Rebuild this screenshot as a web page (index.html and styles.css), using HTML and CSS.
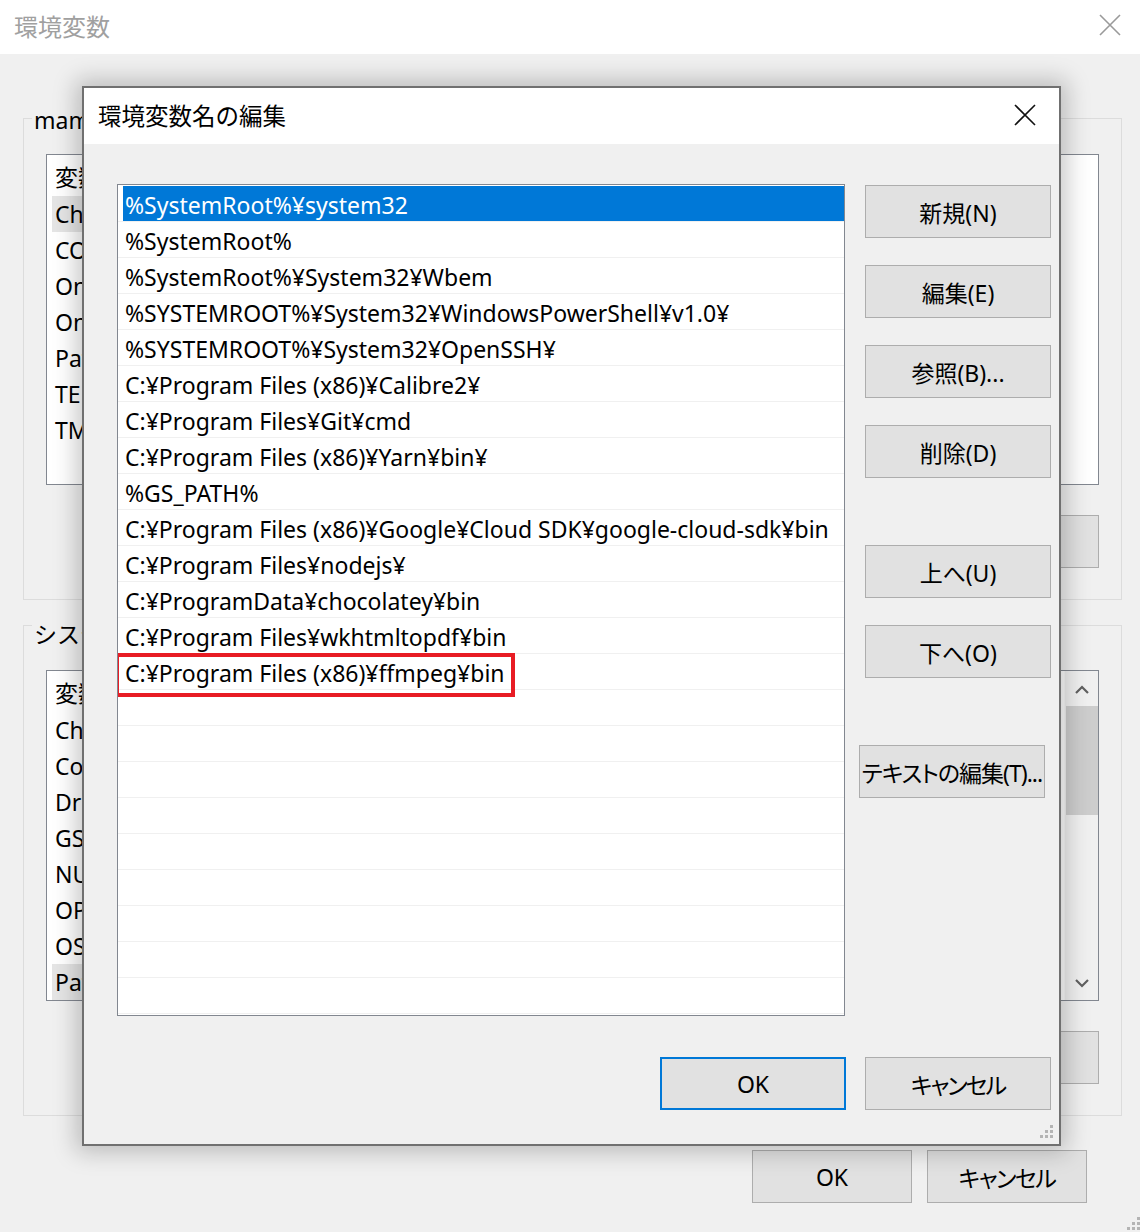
FILE: index.html
```html
<!DOCTYPE html>
<html lang="ja">
<head>
<meta charset="utf-8">
<title>環境変数</title>
<link rel="stylesheet" href="styles.css">
</head>
<body>
<div class="win">
  <div class="win-titlebar">
    <span class="win-title">環境変数</span>
    <svg class="win-close" width="22" height="22" viewBox="0 0 22 22"><path d="M1 1 L21 21 M21 1 L1 21" stroke="#9a9a9a" stroke-width="1.6" fill="none"/></svg>
  </div>
  <div class="win-body">
    <div class="group g1">
      <span class="legend">mama のユーザー環境変数(U)</span>
      <div class="bg-list">
        <div class="bg-row head">変数</div>
        <div class="bg-row hl">ChocolateyLastPathUpdate</div>
        <div class="bg-row">COMPOSER_HOME</div>
        <div class="bg-row">OneDrive</div>
        <div class="bg-row">OneDriveConsumer</div>
        <div class="bg-row">Path</div>
        <div class="bg-row">TEMP</div>
        <div class="bg-row">TMP</div>
      </div>
      <div class="bg-btns">
        <div class="btn bg-btn"></div>
        <div class="btn bg-btn"></div>
        <div class="btn bg-btn"></div>
      </div>
    </div>
    <div class="group g2">
      <span class="legend">システム環境変数(S)</span>
      <div class="bg-list with-scroll">
        <div class="bg-rows">
          <div class="bg-row head">変数</div>
          <div class="bg-row">ChocolateyInstall</div>
          <div class="bg-row">ComSpec</div>
          <div class="bg-row">DriverData</div>
          <div class="bg-row">GS_PATH</div>
          <div class="bg-row">NUMBER_OF_PROCESSORS</div>
          <div class="bg-row">OPENSSL_CONF</div>
          <div class="bg-row">OS</div>
          <div class="bg-row hl">Path</div>
        </div>
        <div class="vscroll">
          <svg class="arrow up" width="16" height="10" viewBox="0 0 16 10"><path d="M2 8 L8 2 L14 8" stroke="#606060" stroke-width="2.2" fill="none"/></svg>
          <div class="thumb"></div>
          <div class="track"></div>
          <svg class="arrow down" width="16" height="10" viewBox="0 0 16 10"><path d="M2 2 L8 8 L14 2" stroke="#606060" stroke-width="2.2" fill="none"/></svg>
        </div>
      </div>
      <div class="bg-btns">
        <div class="btn bg-btn"></div>
        <div class="btn bg-btn"></div>
        <div class="btn bg-btn"></div>
      </div>
    </div>
    <div class="win-foot">
      <div class="btn foot-btn">OK</div>
      <div class="btn foot-btn"><span class="kana">キャンセル</span></div>
    </div>
  </div>
  <svg class="grip win-grip" width="15" height="15" viewBox="0 0 15 15"><g fill="#b4b4b4"><rect x="11" y="1" width="3" height="3"/><rect x="6" y="6" width="3" height="3"/><rect x="11" y="6" width="3" height="3"/><rect x="1" y="11" width="3" height="3"/><rect x="6" y="11" width="3" height="3"/><rect x="11" y="11" width="3" height="3"/></g></svg>
</div>

<div class="dialog">
  <div class="dlg-titlebar">
    <span class="dlg-title">環境変数名の編集</span>
    <svg class="dlg-close" width="22" height="22" viewBox="0 0 22 22"><path d="M1 1 L21 21 M21 1 L1 21" stroke="#111" stroke-width="1.6" fill="none"/></svg>
  </div>
  <div class="dlg-body">
    <div class="dlg-main">
      <div class="path-list">
        <div class="row sel"><span class="cell">%SystemRoot%¥system32</span></div>
        <div class="row"><span class="cell">%SystemRoot%</span></div>
        <div class="row"><span class="cell">%SystemRoot%¥System32¥Wbem</span></div>
        <div class="row"><span class="cell">%SYSTEMROOT%¥System32¥WindowsPowerShell¥v1.0¥</span></div>
        <div class="row"><span class="cell">%SYSTEMROOT%¥System32¥OpenSSH¥</span></div>
        <div class="row"><span class="cell">C:¥Program Files (x86)¥Calibre2¥</span></div>
        <div class="row"><span class="cell">C:¥Program Files¥Git¥cmd</span></div>
        <div class="row"><span class="cell">C:¥Program Files (x86)¥Yarn¥bin¥</span></div>
        <div class="row"><span class="cell">%GS_PATH%</span></div>
        <div class="row"><span class="cell">C:¥Program Files (x86)¥Google¥Cloud SDK¥google-cloud-sdk¥bin</span></div>
        <div class="row"><span class="cell">C:¥Program Files¥nodejs¥</span></div>
        <div class="row"><span class="cell">C:¥ProgramData¥chocolatey¥bin</span></div>
        <div class="row"><span class="cell">C:¥Program Files¥wkhtmltopdf¥bin</span></div>
        <div class="row marked"><span class="cell">C:¥Program Files (x86)¥ffmpeg¥bin</span><span class="mark"></span></div>
        <div class="row"><span class="cell"></span></div>
        <div class="row"><span class="cell"></span></div>
        <div class="row"><span class="cell"></span></div>
        <div class="row"><span class="cell"></span></div>
        <div class="row"><span class="cell"></span></div>
        <div class="row"><span class="cell"></span></div>
        <div class="row"><span class="cell"></span></div>
        <div class="row"><span class="cell"></span></div>
        <div class="row last"><span class="cell"></span></div>
      </div>
      <div class="dlg-side">
        <div class="btn side-btn">新規(N)</div>
        <div class="btn side-btn">編集(E)</div>
        <div class="btn side-btn">参照(B)...</div>
        <div class="btn side-btn">削除(D)</div>
        <div class="btn side-btn sep">上へ(U)</div>
        <div class="btn side-btn">下へ(O)</div>
        <div class="btn side-btn sep text-edit"><span class="kana te">テキストの編集(T)...</span></div>
      </div>
    </div>
    <div class="dlg-foot">
      <div class="btn side-btn default">OK</div>
      <div class="btn side-btn"><span class="kana dk">キャンセル</span></div>
    </div>
  </div>
  <svg class="grip dlg-grip" width="15" height="15" viewBox="0 0 15 15"><g fill="#b4b4b4"><rect x="11" y="1" width="3" height="3"/><rect x="6" y="6" width="3" height="3"/><rect x="11" y="6" width="3" height="3"/><rect x="1" y="11" width="3" height="3"/><rect x="6" y="11" width="3" height="3"/><rect x="11" y="11" width="3" height="3"/></g></svg>
</div>
</body>
</html>
```
FILE: styles.css
```css
* { box-sizing: border-box; }
html, body { margin: 0; padding: 0; }
body {
  width: 1140px;
  height: 1232px;
  overflow: hidden;
  position: relative;
  background: #f0f0f0;
  font-family: "Noto Sans", "Noto Sans CJK JP", sans-serif;
  font-size: 23px;
  color: #000;
}
.win { width: 1140px; height: 1232px; position: relative; }
.win-titlebar {
  height: 54px;
  background: #fff;
  display: flex;
  align-items: center;
  justify-content: space-between;
  padding: 0 19px 0 14px;
}
.win-title { font-size: 24px; color: #a0a0a0; margin-top: -4px; }
.win-close { margin-top: -4px; }
.win-body { padding: 64px 18px 0 23px; }
.group {
  position: relative;
  border: 1px solid #dcdcdc;
  padding: 35px 22px 31px 22px;
}
.g2 { margin-top: 25px; padding-top: 44px; }
.legend {
  position: absolute;
  top: -17px;
  left: 8px;
  padding: 0 2px;
  background: #f0f0f0;
  white-space: nowrap;
}
.g2 .legend { top: -10px; }
.bg-list {
  height: 331px;
  background: #fff;
  border: 1px solid #828790;
  padding: 3px 0 0 5px;
  overflow: hidden;
}
.bg-row {
  height: 36px;
  line-height: 36px;
  padding-left: 3px;
  white-space: nowrap;
}
.bg-row.head { height: 38px; line-height: 38px; }
.bg-row.hl { background: #e5e5e5; width: 280px; }
.with-scroll { display: flex; padding-right: 0; }
.bg-rows { flex: 1; }
.vscroll {
  width: 34px;
  margin-top: -3px;
  height: 329px;
  background: #f0f0f0;
  border-left: 1px solid #fafafa;
  display: flex;
  flex-direction: column;
  align-items: center;
}
.vscroll .arrow.up { margin: 14px 0 11px; }
.vscroll .thumb { width: 32px; height: 109px; background: #cdcdcd; }
.vscroll .track { flex: 1; }
.vscroll .arrow.down { margin: 0 0 12px; }
.btn {
  background: #e1e1e1;
  border: 1px solid #adadad;
  display: flex;
  align-items: center;
  justify-content: center;
  white-space: nowrap;
  height: 53px;
}
.kana {
  display: inline-block;
  font-feature-settings: "palt" 1;
  letter-spacing: -1.5px;
}
.kana.dk { letter-spacing: -2px; }
.kana.te { letter-spacing: -1px; }
.bg-btns {
  margin-top: 30px;
  display: flex;
  justify-content: flex-end;
  gap: 15px;
}
.bg-btn { width: 160px; }
.win-foot {
  margin-top: 34px;
  display: flex;
  justify-content: flex-end;
  gap: 15px;
  padding-right: 35px;
}
.foot-btn { width: 160px; }
.grip { position: absolute; }
.win-grip { right: -1px; bottom: 1px; }

.dialog {
  position: absolute;
  left: 82px;
  top: 86px;
  width: 979px;
  height: 1060px;
  border: 2px solid #707070;
  background: #f0f0f0;
  box-shadow: 0 0 22px 6px rgba(0, 0, 0, 0.22);
}
.dlg-titlebar {
  height: 56px;
  background: #fff;
  display: flex;
  align-items: center;
  justify-content: space-between;
  padding: 0 23px 0 14px;
}
.dlg-title { font-size: 23.5px; margin-top: -3px; }
.dlg-close { margin-top: -2px; }
.dlg-body { padding: 40px 8px 0 33px; }
.dlg-main { display: flex; gap: 20px; }
.path-list {
  position: relative;
  width: 728px;
  height: 832px;
  background: #fff;
  border: 1px solid #828790;
  padding-top: 1px;
  overflow: hidden;
}
.row {
  position: relative;
  height: 36px;
  border-bottom: 1px solid #f0f0f0;
  padding-left: 5px;
}
.row .cell {
  display: block;
  height: 35px;
  line-height: 34px;
  padding: 2px 0 0 2px;
  white-space: nowrap;
}
.row.sel .cell { background: #0078d7; color: #fff; }
.mark {
  position: absolute;
  left: -3px;
  top: -1px;
  width: 400px;
  height: 44px;
  border: 4px solid #e81c24;
}
.dlg-side {
  width: 186px;
  padding-top: 1px;
  display: flex;
  flex-direction: column;
  gap: 27px;
}
.side-btn { width: 186px; }
.sep { margin-top: 40px; }
.text-edit { margin-left: -6px; }
.dlg-foot {
  margin-top: 41px;
  display: flex;
  justify-content: flex-end;
  gap: 19px;
}
.default { border: 2px solid #0078d7; }
.dlg-grip { right: 5px; bottom: 5px; }
```
